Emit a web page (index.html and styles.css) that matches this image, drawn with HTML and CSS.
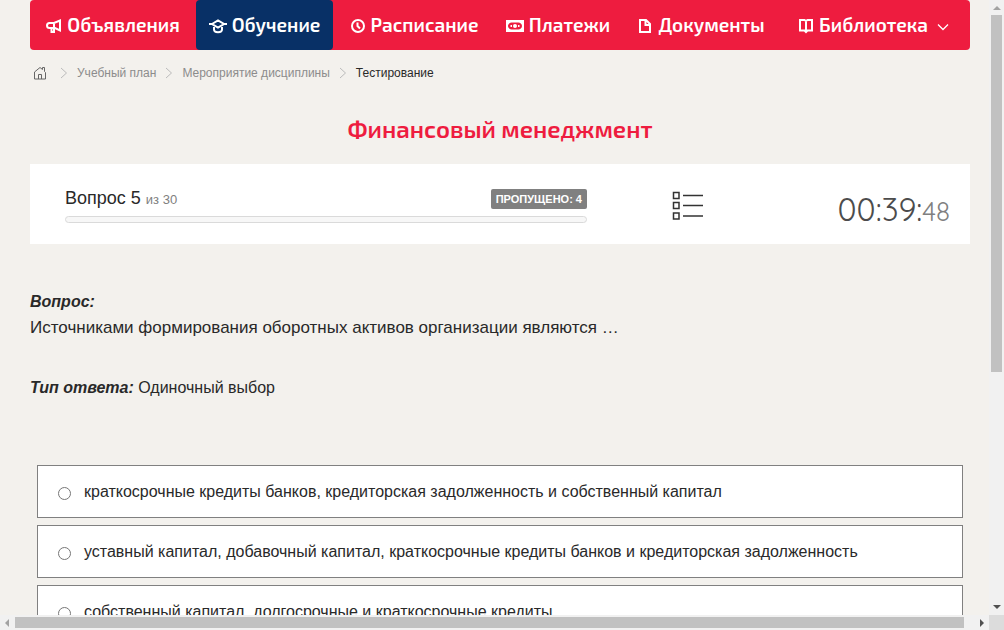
FILE: index.html
```html
<!DOCTYPE html>
<html lang="ru">
<head>
<meta charset="utf-8">
<title>Финансовый менеджмент</title>
<link rel="stylesheet" href="styles.css">
</head>
<body>
<div class="page">
  <nav class="nav">
    <a class="nav-item" href="#"><svg class="icon" viewBox="0 0 16 16"><path d="M14 2.500v10L9 10H3.500a2.300 2.300 0 0 1 0-5H8zM8 5v5M5.500 10.500V14H8v-4"/></svg>Объявления</a>
    <a class="nav-item active" href="#"><svg class="icon icon-wide" viewBox="0 0 18 16"><path d="M0 6h3M15 6h3M3 6l6-3.500L15 6 9 9.500zM5 9v2.500C5 15 13 15 13 11.500V9"/></svg>Обучение</a>
    <a class="nav-item" href="#"><svg class="icon" viewBox="0 0 16 16"><circle cx="8" cy="8" r="6"/><path d="M7.500 4.500V8l2.500 2.500"/></svg>Расписание</a>
    <a class="nav-item" href="#"><svg class="icon icon-wide" viewBox="0 0 18 16"><path class="solid" fill-rule="evenodd" d="M0 2h18v12H0zM5.500 4.500C4 4.500 2 6 2 8s2 3.500 3.500 3.500h7C14 11.500 16 10 16 8s-2-3.500-3.500-3.500z"/><circle class="solid" cx="9" cy="8" r="2"/><path d="M4.500 8H6M12 8h1.500"/></svg>Платежи</a>
    <a class="nav-item" href="#"><svg class="icon" viewBox="0 0 16 16"><path d="M3 2h6l4 4v8H3zM8.500 2v5H13"/></svg>Документы</a>
    <a class="nav-item" href="#"><svg class="icon" viewBox="0 0 16 16"><path d="M2 2h4.500L8 3l1.500-1H14v10.500H9.500L8 14l-1.500-1.500H2zM8 3v11"/></svg>Библиотека<svg class="caret" viewBox="0 0 12 8"><path d="M1 1.500l5 5 5-5"/></svg></a>
  </nav>
  <nav class="crumbs">
    <a class="home" href="#" aria-label="Главная"><svg viewBox="0 0 14 14"><path d="M1.500 13V6L7 1.500l2.500 2V1.500h2v4l1 1V13zM5.500 13V8.500h3V13"/></svg></a>
    <svg class="sep" viewBox="0 0 8 12"><path d="M1 1l5.500 5L1 11"/></svg>
    <a href="#">Учебный план</a>
    <svg class="sep" viewBox="0 0 8 12"><path d="M1 1l5.500 5L1 11"/></svg>
    <a href="#">Мероприятие дисциплины</a>
    <svg class="sep" viewBox="0 0 8 12"><path d="M1 1l5.500 5L1 11"/></svg>
    <span class="current">Тестирование</span>
  </nav>
  <h1 class="title">Финансовый менеджмент</h1>
  <section class="status">
    <div class="progress">
      <div class="progress-head">
        <div class="count">Вопрос 5 <small>из 30</small></div>
        <span class="badge">ПРОПУЩЕНО: 4</span>
      </div>
      <div class="bar"></div>
    </div>
    <button class="list-button" type="button" aria-label="Список вопросов"><svg viewBox="0 0 32 30"><path d="M1.500 1.500h5.500v6H1.500zM1.500 11.500h5.500v6H1.500zM1.500 22h5.500v6H1.500zM11 4.500h20M11 14.500h20M11 25h20"/></svg></button>
    <div class="timer">00:39:<small>48</small></div>
  </section>
  <section class="question">
    <h2 class="label">Вопрос:</h2>
    <p class="text">Источниками формирования оборотных активов организации являются …</p>
    <p class="type"><span class="label">Тип ответа:</span> Одиночный выбор</p>
  </section>
  <form class="answers">
    <label class="answer"><input type="radio" name="answer">краткосрочные кредиты банков, кредиторская задолженность и собственный капитал</label>
    <label class="answer"><input type="radio" name="answer">уставный капитал, добавочный капитал, краткосрочные кредиты банков и кредиторская задолженность</label>
    <label class="answer"><input type="radio" name="answer">собственный капитал, долгосрочные и краткосрочные кредиты</label>
  </form>
</div>
<div class="scroll vertical">
  <svg class="arrow muted" viewBox="0 0 15 15"><path d="M4 10h8L8 6z"/></svg>
  <div class="track"><div class="thumb"></div></div>
  <svg class="arrow" viewBox="0 0 15 15"><path d="M4 5h8L8 9z"/></svg>
</div>
<div class="scroll horizontal">
  <svg class="arrow muted" viewBox="0 0 15 15"><path d="M9 4v8L5 8z"/></svg>
  <div class="track"><div class="thumb"></div></div>
  <svg class="arrow" viewBox="0 0 15 15"><path d="M6 4v8l4-4z"/></svg>
</div>
<div class="corner"></div>
</body>
</html>
```
FILE: styles.css
```css
* { box-sizing: border-box; }

body {
  margin: 0;
  height: 100vh;
  overflow: hidden;
  display: grid;
  grid-template: minmax(0, 1fr) 15px / minmax(0, 1fr) 15px;
  background: #f3f1ed;
  color: #292929;
  font: 16px/24px "Liberation Sans", Arial, sans-serif;
}

a { color: inherit; text-decoration: none; }
svg { flex: none; fill: none; stroke: currentColor; }

.page { overflow: hidden; padding: 0 19px 0 30px; }

.nav {
  display: grid;
  grid-template-columns: 166fr 137fr 162fr 126fr 160fr 189fr;
  height: 50px;
  border-radius: 4px;
  background: #ee1c3f;
  color: #fff;
  font: 600 19px/24px "Exo 2", Roboto, sans-serif;
}
.nav-item {
  display: flex;
  align-items: center;
  justify-content: center;
  gap: 5px;
  border-radius: 4px;
  white-space: nowrap;
}
.nav-item.active { background: #083066; }
.icon { width: 16px; height: 16px; margin-top: 2px; stroke-width: 2; }
.icon-wide { width: 18px; }
.icon .solid { fill: currentColor; stroke: none; }
.caret { width: 12px; height: 8px; margin: 3px 4px 0; stroke-width: 1.3; }

.crumbs {
  display: flex;
  align-items: center;
  height: 46px;
  padding-left: 3px;
  gap: 9px;
  color: #8c8c8c;
  font-size: 12px;
}
.home { display: flex; margin-right: 4px; color: #666; }
.home svg { width: 14px; height: 14px; }
.sep { width: 8px; height: 12px; color: #bbb; }
.current { color: #292929; }

.title {
  margin: 19px 0 21px;
  color: #ee1c3f;
  font: 600 24px/28px "Exo 2", Roboto, sans-serif;
  text-align: center;
}

.status {
  display: grid;
  grid-template-columns: 522fr 201fr 162fr;
  align-items: center;
  min-height: 80px;
  padding: 0 20px 0 35px;
  background: #fff;
}
.progress-head { display: flex; justify-content: space-between; align-items: center; }
.count { padding-top: 1px; font-size: 18px; }
.count small { color: #808080; font-size: 13px; }
.badge {
  padding: 0 5px;
  border-radius: 2px;
  background: #808080;
  color: #fff;
  font: bold 11px/20px "Liberation Sans", Arial, sans-serif;
}
.bar {
  height: 7px;
  margin-top: 4px;
  border: 1px solid #dadada;
  border-radius: 4px;
  background: #f7f7f7;
}
.list-button {
  display: flex;
  justify-self: center;
  padding: 4px 0 0;
  border: 0;
  background: none;
  color: #333;
}
.list-button svg { width: 32px; height: 30px; stroke-width: 1.5; }
.timer {
  padding-top: 12px;
  color: #4c4c4c;
  font: 400 32px/40px Quicksand, Lato, sans-serif;
  text-align: right;
  white-space: nowrap;
}
.timer small { color: #808080; font-size: 26px; }

.question { padding: 46px 0 65px; }
.question p { margin: 0; }
.label { margin: 0; font-size: 16px; font-style: italic; font-weight: bold; }
.question .text { margin-bottom: 34px; font-size: 17px; line-height: 28px; }

.answers { display: grid; gap: 7px; padding: 0 7px; }
.answer {
  display: flex;
  align-items: center;
  gap: 13px;
  min-height: 53px;
  padding: 0 20px;
  border: 1px solid #808080;
  background: #fff;
}
.answer input { width: 13px; height: 13px; margin: 4px 0 0; }

.scroll { display: flex; background: #f1f1f1; }
.vertical { flex-direction: column; }
.horizontal { grid-row: 2; }
.arrow { width: 15px; height: 15px; color: #505050; fill: currentColor; stroke: none; }
.muted { color: #a3a3a3; }
.track { flex: 1; padding: 2px 0; }
.vertical .track { padding: 0 2px; }
.thumb { width: 99%; height: 100%; background: #c1c1c1; }
.vertical .thumb { width: 100%; height: 61%; }
.corner { background: #dcdcdc; }
```
